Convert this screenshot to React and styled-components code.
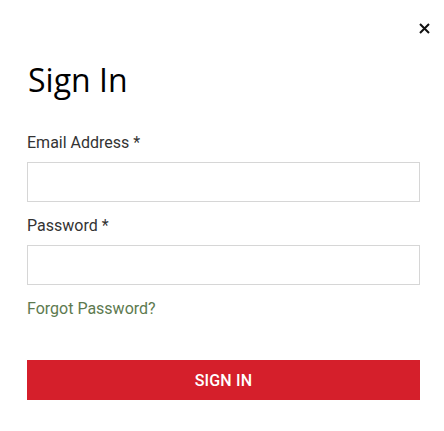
import React from 'react';
import styled, { createGlobalStyle } from 'styled-components';

//styling
const GlobalStyle = createGlobalStyle`
    html, body {
        margin: 0;
        padding: 0;
        background: #fff;
    }
`

const StyledModal = styled.div`
    width: 444px;
    height: 431px;
    box-sizing: border-box;
    padding: 1px 24px 0 27px;
    position: relative;
    background: #fff;
    font-family: Roboto, "Liberation Sans", sans-serif;
`

const CloseButton = styled.button`
    position: absolute;
    top: 21px;
    right: 13px;
    width: 14px;
    height: 14px;
    padding: 0;
    border: none;
    background: transparent;
    display: flex;
    align-items: center;
    justify-content: center;
    cursor: pointer;
`

const Title = styled.h1`
    margin: 0 0 0 1px;
    padding-top: 59px;
    font-family: "Open Sans", "Noto Sans", sans-serif;
    font-weight: 450;
    font-size: 32px;
    line-height: 40px;
    color: #000;
`

const Form = styled.form`
    display: flex;
    flex-direction: column;
    align-items: flex-start;
    margin-top: 33px;
`

const Label = styled.label`
    font-size: 16px;
    line-height: 20px;
    color: #333;
    margin-bottom: 9px;
`

const Input = styled.input`
    box-sizing: border-box;
    width: 393px;
    height: 40px;
    border: 1px solid #d6d6d6;
    margin: 0 0 14px;
    padding: 0 10px;
    font-size: 16px;
    outline: none;
`

const ForgotLink = styled.a`
    font-size: 16px;
    line-height: 20px;
    color: #5d7a4f;
    text-decoration: none;
`

const SubmitButton = styled.button`
    width: 393px;
    height: 40px;
    margin-top: 41px;
    border: none;
    background: #d51f2b;
    color: #fff;
    font-family: Roboto, "Liberation Sans", sans-serif;
    font-weight: 500;
    font-size: 16px;
    letter-spacing: 0.2px;
    cursor: pointer;
`

//********************************************* */
function App() {
    return (
        <>
            <GlobalStyle />
            <StyledModal className="sign-in">
                <CloseButton aria-label="Close">
                    <svg width="11" height="11" viewBox="0 0 11 11">
                        <path d="M1 1 L10 10 M10 1 L1 10" stroke="#111" strokeWidth="2" fill="none" />
                    </svg>
                </CloseButton>
                <Title>Sign In</Title>
                <Form onSubmit={e => e.preventDefault()}>
                    <Label htmlFor="email">Email Address *</Label>
                    <Input id="email" type="email" />
                    <Label htmlFor="password">Password *</Label>
                    <Input id="password" type="password" />
                    <ForgotLink href="#">Forgot Password?</ForgotLink>
                    <SubmitButton type="submit">SIGN IN</SubmitButton>
                </Form>
            </StyledModal>
        </>
    )
}

export default App;
